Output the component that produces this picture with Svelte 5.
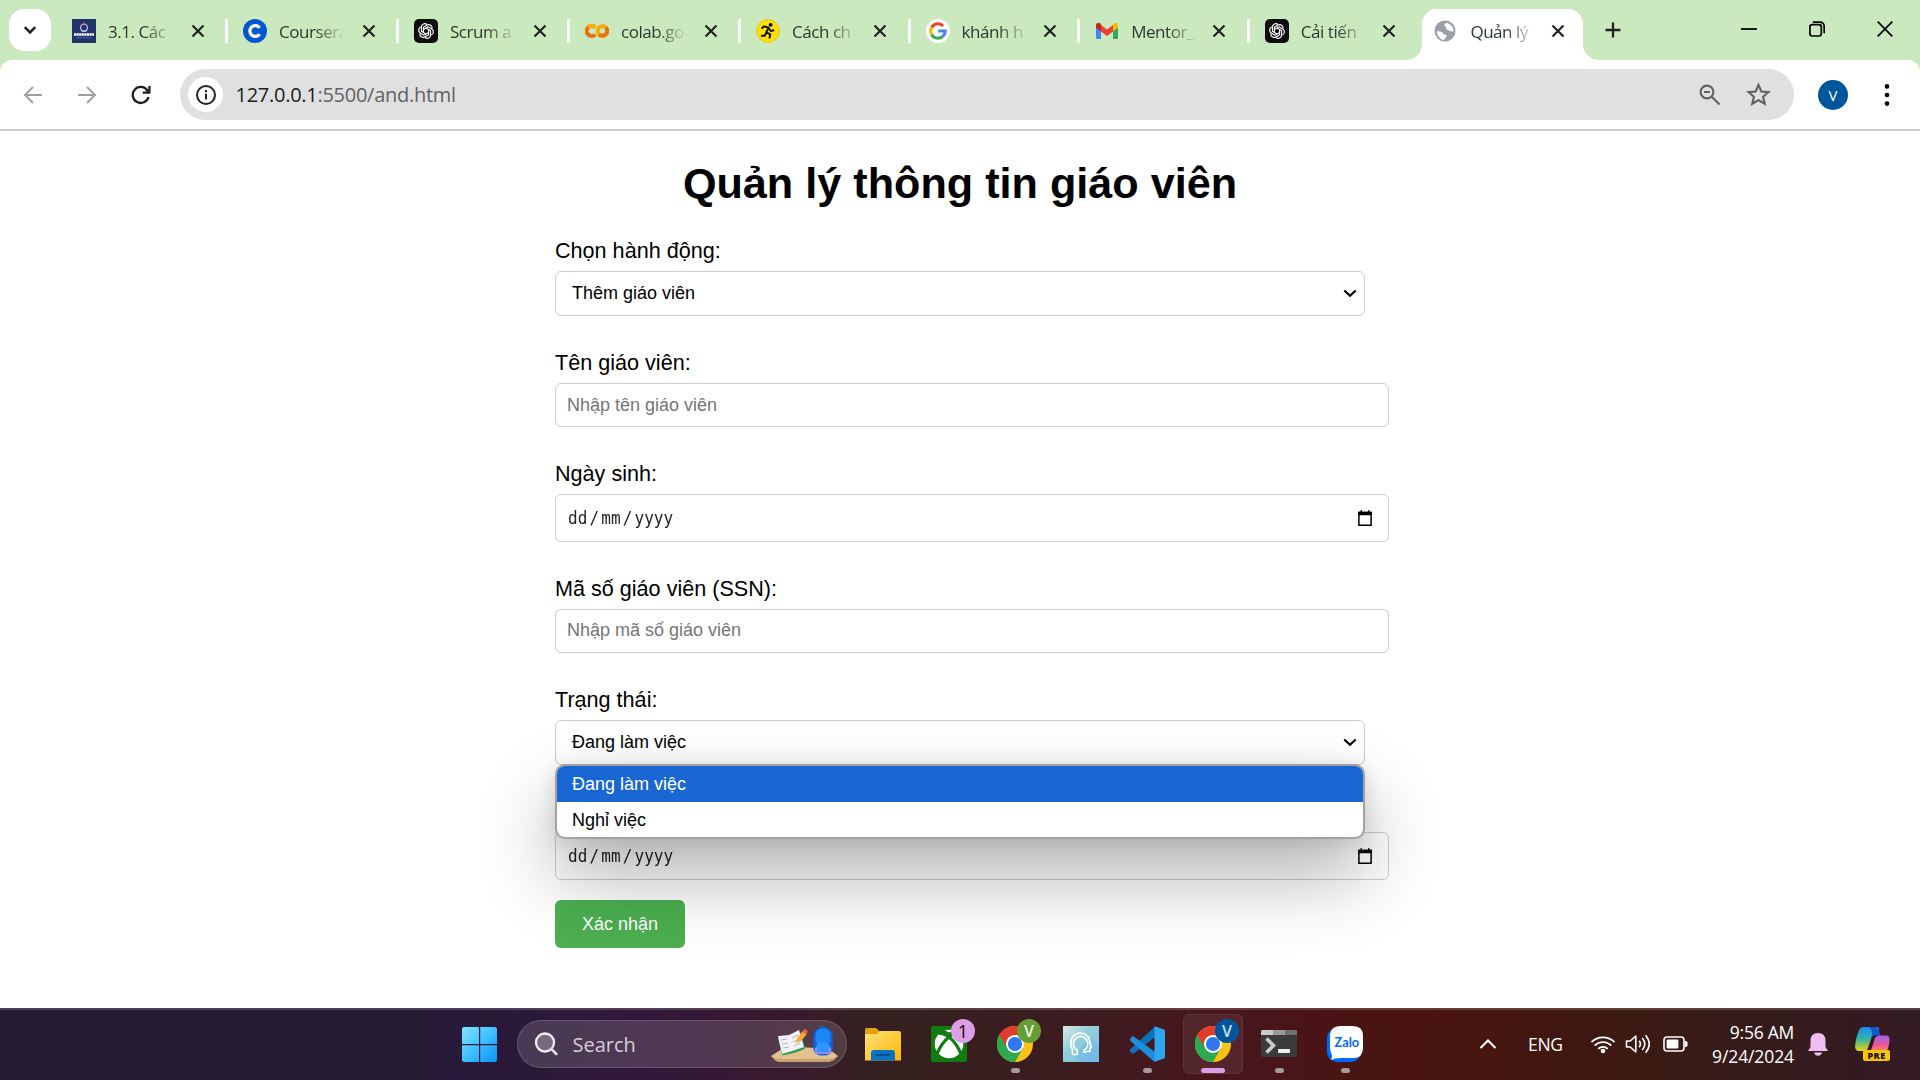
<script>
  const tabs = [
    { icon: 'phenikaa', title: '3.1. Các' },
    { icon: 'coursera', title: 'Coursera' },
    { icon: 'gpt', title: 'Scrum a' },
    { icon: 'colab', title: 'colab.go' },
    { icon: 'runner', title: 'Cách ch' },
    { icon: 'google', title: 'khánh h' },
    { icon: 'gmail', title: 'Mentor_' },
    { icon: 'gpt', title: 'Cải tiến' },
    { icon: 'globe', title: 'Quản lý', active: true }
  ];
  const fields = [
    { label: 'Chọn hành động:', kind: 'select', text: 'Thêm giáo viên' },
    { label: 'Tên giáo viên:', kind: 'text', text: 'Nhập tên giáo viên' },
    { label: 'Ngày sinh:', kind: 'date' },
    { label: 'Mã số giáo viên (SSN):', kind: 'text', text: 'Nhập mã số giáo viên' },
    { label: 'Trạng thái:', kind: 'select', text: 'Đang làm việc', options: ['Đang làm việc', 'Nghỉ việc'] },
    { label: '', kind: 'date' }
  ];
  const apps = [
    { icon: 'folder' },
    { icon: 'xbox', badge: '1', tone: 'pink' },
    { icon: 'chrome', badge: 'V', tone: 'green', run: true },
    { icon: 'head' },
    { icon: 'vscode', run: true },
    { icon: 'chrome', badge: 'V', tone: 'blue', run: true, active: true },
    { icon: 'terminal', run: true },
    { icon: 'zalo', run: true }
  ];
  const petals = [0, 60, 120, 180, 240, 300];
</script>

{#snippet favicon(name)}
  <svg class="fav" viewBox="0 0 24 24">
    {#if name === 'phenikaa'}
      <rect width="24" height="24" fill="#21356d" />
      <circle cx="12" cy="8.6" r="3.4" fill="none" stroke="#c9d0e4" stroke-width="1.1" />
      <path d="M10.4 5.4 12 4l1.6 1.4" fill="none" stroke="#e0603a" stroke-width="1.3" />
      <path d="M9.5 12.3h5" stroke="#c9d0e4" stroke-width="1" />
      <path d="M2 15.5h20" stroke="#fff" stroke-width="2.4" stroke-dasharray="2.2 .4" />
      <path d="M4.5 18.7h15" stroke="#7886ae" stroke-width=".8" stroke-dasharray="1 .5" />
    {:else if name === 'coursera'}
      <circle cx="12" cy="12" r="12" fill="#0056d2" />
      <path d="M16.6 15.2a5.4 5.4 0 1 1 0-6.4" fill="none" stroke="#fff" stroke-width="3.2" />
    {:else if name === 'gpt'}
      <rect width="24" height="24" rx="5" fill="#0d0d0d" />
      <g fill="none" stroke="#fff" stroke-width="1.15" stroke-linejoin="round">
        {#each petals as a}
          <path d="M9.4 13.5V8.2l3.7-2.1c2.6-1.5 5.4.7 5 3.4" transform="rotate({a} 12 12)" />
        {/each}
      </g>
    {:else if name === 'colab'}
      <g fill="none" stroke-width="4">
        <path d="M10.2 8.4A5 5 0 1 0 10.2 15.6" stroke="#e8710a" />
        <path d="M3.2 8.2A5 5 0 0 1 10.2 8.4" stroke="#f9ab00" />
        <circle cx="17.4" cy="12" r="4.8" stroke="#f9ab00" />
        <path d="M14 15.4A4.8 4.8 0 0 0 20.8 8.6" stroke="#e8710a" />
      </g>
    {:else if name === 'runner'}
      <circle cx="12" cy="12" r="11.4" fill="#ffe000" stroke="#e8c11c" />
      <circle cx="14.6" cy="5.8" r="1.9" />
      <path d="M5.5 9.5 8 7.4l4.4 1.2-2 4.6 3.8 2.3-.8 4M10.6 13.6l-2 3.2H5M12.6 9l2.2 3 3.4-.7" fill="none" stroke="#111" stroke-width="2" />
    {:else if name === 'google'}
      <circle cx="12" cy="12" r="12" fill="#fff" />
      <g fill="none" stroke-width="3">
        <path d="M17.2 7A7.3 7.3 0 0 0 5.6 8.5" stroke="#ea4335" />
        <path d="M5.6 8.5a7.3 7.3 0 0 0 0 7" stroke="#fbbc05" />
        <path d="M5.6 15.5A7.3 7.3 0 0 0 16.8 17.4" stroke="#34a853" />
        <path d="M16.8 17.4A7.3 7.3 0 0 0 19.3 12.1H12.2" stroke="#4285f4" />
      </g>
    {:else if name === 'gmail'}
      <path d="M1 6.5v12A1.5 1.5 0 0 0 2.5 20H6V9z" fill="#4285f4" />
      <path d="M23 6.5v12a1.5 1.5 0 0 1-1.5 1.5H18V9z" fill="#34a853" />
      <path d="M6 6v6.4l6 4.6 6-4.6V6l-6 4.6z" fill="#ea4335" />
      <path d="M1 6.4C1 3.8 3.8 3 5.3 4.4L6 5v7.4L1 8.8z" fill="#c5221f" />
      <path d="M23 6.4c0-2.6-2.8-3.4-4.3-2L18 5v7.4l5-3.6z" fill="#fbbc04" />
    {:else}
      <circle cx="11" cy="12" r="10.5" fill="#9aa0a6" />
      <path d="M3 12.500c2.400-.5 5 .3 6.400 2.200 1 1.300 3.600.5 3.400 2.500-.1 1.300-2 1-2.600 3.800-4-.3-7-4-7.200-8.500zM12.500 4c-2.500.5-2.800 2.500-1.200 3.600 1.500 1 .5 3 2.500 3.500 2.200.5 3 2 5.700 1.300.3-3.600-2-7.400-7-8.400z" fill="#fff" />
    {/if}
  </svg>
{/snippet}

{#snippet appIcon(name)}
  <svg class="app-icon" viewBox="0 0 36 36">
    {#if name === 'folder'}
      <path d="M0 4a2 2 0 0 1 2-2h9l4 3.500V10H0z" fill="#e3a008" />
      <path d="M0 8h12l3-3h19a2 2 0 0 1 2 2v27.500H0z" fill="url(#fold)" />
      <path d="M6 34.500V27a3 3 0 0 1 3-3h18a3 3 0 0 1 3 3v7.500z" fill="#0a72c4" />
      <path d="M11 29h14" stroke="#07457e" stroke-width="1.500" />
    {:else if name === 'xbox'}
      <rect width="36" height="36" rx="2" fill="#107c10" />
      <circle cx="18" cy="18" r="14.300" fill="#fff" />
      <path d="M8.500 5.500c3.500-1 7 1 9.500 2.800 2.500-1.800 6-3.800 9.500-2.800M5.500 29.500C8.500 21 13.500 14.500 18 11c4.500 3.500 9.500 10 12.500 18.500M18 11C14.800 8.700 11.500 6.800 8 7.500M18 11c3.200-2.300 6.500-4.200 10-3.500" fill="none" stroke="#107c10" stroke-width="3.200" />
    {:else if name === 'chrome'}
      <circle cx="18" cy="18" r="18" fill="#fbc116" />
      <path d="M18 18 2.400 9A18 18 0 0 0 18 36l7.800-13.500z" fill="#2da94f" />
      <path d="M2.400 9A18 18 0 0 1 33.600 9H18a9 9 0 0 0-7.800 13.500z" fill="#e33b2e" />
      <circle cx="18" cy="18" r="9" fill="#fff" />
      <circle cx="18" cy="18" r="7.100" fill="#2f78ee" />
    {:else if name === 'head'}
      <rect width="36" height="36" fill="url(#teal)" />
      <path d="m11 29 7 7h18V19l-9-7z" fill="#69b3e8" opacity=".5" />
      <g fill="none" stroke="#fff" stroke-width="1.700" stroke-linejoin="round">
        <path d="M9.500 28.500v-5C8.300 21.500 7.800 19.500 7.800 17c0-6 4-9.800 9.700-9.800S27 11 27 16.500l1.300 5H27v4h-4.500" />
        <path d="M9.500 28.500h4.800V24a7.200 7.200 0 1 1 6.700 0v2h2" />
      </g>
    {:else if name === 'vscode'}
      <path d="M1 23.500 25.500 1l2 9L4 28l-3-2.500z" fill="#0b72bd" />
      <path d="M1 12.500 4 10l23.500 17-2 9L1 14.500z" fill="#1a8fdb" />
      <path d="M25.500 0 36 4v28l-10.500 4z" fill="#2fa5ee" />
    {:else if name === 'terminal'}
      <path d="M0 6a2 2 0 0 1 2-2h32a2 2 0 0 1 2 2v4H0z" fill="#9b9b9b" />
      <path d="M0 6a2 2 0 0 1 2-2h10v5H0z" fill="#ccc" />
      <path d="M24 4h10a2 2 0 0 1 2 2v3H24z" fill="#707070" />
      <path d="M0 9h36v20a2 2 0 0 1-2 2H2a2 2 0 0 1-2-2z" fill="#3b3b3b" />
      <path d="m5.500 12.500 7 7-7 7" fill="none" stroke="#ccc" stroke-width="3.600" />
      <rect x="17" y="23" width="12" height="4" rx=".7" fill="#eee" />
    {:else}
      <rect x="0" y="2" width="34" height="34" rx="10" fill="#0068ff" />
      <path d="M14 0h12q10 0 10 10v12q0 10-10 10H14q-4 0-6 .6-2 1.200-4.500.8 2-1.700 1.500-4Q3 26 3 20V10Q3 0 14 0z" fill="#fff" />
      <text x="19.800" y="21" text-anchor="middle" class="zalo">Zalo</text>
    {/if}
  </svg>
{/snippet}

{#snippet cross()}
  <svg class="cross" viewBox="0 0 16 16"><path d="m2.500 2.500 11 11m0-11-11 11" fill="none" stroke="#1f2420" stroke-width="2.200" /></svg>
{/snippet}

<svg class="defs" aria-hidden="true">
  <defs>
    <linearGradient id="fold" x2="1" y2="1"><stop stop-color="#ffe07a" /><stop offset="1" stop-color="#fdb900" /></linearGradient>
    <linearGradient id="teal" x2="1" y2="1"><stop stop-color="#d9e9e4" /><stop offset=".4" stop-color="#93cfd9" /><stop offset="1" stop-color="#7bbfec" /></linearGradient>
    <linearGradient id="win" x2="1" y2="1"><stop stop-color="#86e4ff" /><stop offset=".5" stop-color="#3fc0ff" /><stop offset="1" stop-color="#0893fa" /></linearGradient>
    <linearGradient id="cpA" x2="0" y2="1"><stop stop-color="#1b8df0" /><stop offset=".5" stop-color="#35b4a0" /><stop offset="1" stop-color="#e9d312" /></linearGradient>
    <linearGradient id="cpB" x2="0" y2="1"><stop stop-color="#a45cf0" /><stop offset=".6" stop-color="#f0569a" /><stop offset="1" stop-color="#fc8a4e" /></linearGradient>
  </defs>
</svg>

<div class="screen">
  <header class="strip">
    <button class="tab-search" aria-label="Search tabs">
      <svg width="16" height="16" viewBox="0 0 16 16"><path d="m2.800 5.200 5.200 5.200 5.200-5.200" fill="none" stroke="#1f2420" stroke-width="2.500" /></svg>
    </button>
    <div class="tabs">
      {#each tabs as tab}
        <div class="tab" class:active={tab.active}>
          {@render favicon(tab.icon)}
          <span class="title">{tab.title}</span>
          {@render cross()}
        </div>
      {/each}
    </div>
    <svg class="plus" width="18" height="18" viewBox="0 0 18 18"><path d="M9 1.500v15M1.500 9h15" stroke="#1f2420" stroke-width="2.300" /></svg>
    <div class="window">
      <svg viewBox="0 0 16 16"><path d="M0 8h16" stroke="#000" stroke-width="1.800" /></svg>
      <svg viewBox="0 0 16 16"><rect x=".9" y="3.600" width="11.400" height="11.400" rx="2.400" /><path d="M3.800 1.200h7.200a4.200 4.200 0 0 1 4.200 4.200v6.800" /></svg>
      <svg viewBox="0 0 16 16"><path d="m.7.700 14.600 14.600m0-14.600L.7 15.300" /></svg>
    </div>
  </header>

  <div class="toolbar">
    <svg class="nav" viewBox="0 0 20 20"><path d="M19 10H2.500M10 2l-8 8 8 8" stroke="#a0a0a0" /></svg>
    <svg class="nav" viewBox="0 0 20 20"><path d="M1 10h16.500M10 2l8 8-8 8" stroke="#a0a0a0" /></svg>
    <svg class="nav" viewBox="0 0 20 20"><path d="M17.500 12A8 8 0 1 1 16.200 5.200L18 7.300M18.400 1v6.600h-6.600" stroke="#1f1f1f" stroke-width="2.300" /></svg>
    <div class="omnibox">
      <span class="info">
        <svg width="22" height="22" viewBox="0 0 22 22"><circle cx="11" cy="11" r="9" fill="none" stroke="#222" stroke-width="2" /><path d="M11 9.800v5.700M11 6v2.200" stroke="#222" stroke-width="2" /></svg>
      </span>
      <span class="url">127.0.0.1<span>:5500/and.html</span></span>
      <svg class="zoomed" viewBox="0 0 22 22"><circle cx="8" cy="8" r="6.400" /><path d="m12.700 12.700 7.800 7.800M5 8h6" /></svg>
      <svg class="star" viewBox="0 0 24 24"><path d="m12 2.800 2.700 6.300 6.900.6-5.200 4.500 1.600 6.700-6-3.500-6 3.500 1.600-6.700-5.200-4.500 6.900-.6z" /></svg>
    </div>
    <span class="avatar">V</span>
    <svg class="dots" width="6" height="24" viewBox="0 0 6 24"><circle cx="3" cy="3.400" r="2.300" /><circle cx="3" cy="12" r="2.300" /><circle cx="3" cy="20.600" r="2.300" /></svg>
  </div>

  <main>
    <h1>Quản lý thông tin giáo viên</h1>
    <form>
      {#each fields as f}
        <div class="field">
          <span class="label">{f.label}</span>
          <div class="control {f.kind}">
            {#if f.kind === 'date'}
              <span class="mask"><span>dd</span><span>/</span><span>mm</span><span>/</span><span>yyyy</span></span>
              <svg width="16" height="17" viewBox="0 0 16 17"><path d="M1.900 2.500h12.200v12.800H1.900z" fill="none" stroke="#000" stroke-width="1.500" /><path d="M1.200 1.800h13.600v3.400H1.200zM3.500.3H5V3H3.500zM11 .3h1.500V3H11z" /></svg>
            {:else}
              <span>{f.text}</span>
              {#if f.kind === 'select'}
                <svg width="14" height="9" viewBox="0 0 14 9"><path d="m1.300 1.500 5.700 5.300 5.700-5.300" fill="none" stroke="#000" stroke-width="2.100" /></svg>
              {/if}
            {/if}
            {#if f.options}
              <div class="popup">
                {#each f.options as option, i}
                  <div class="option" class:chosen={i === 0}>{option}</div>
                {/each}
              </div>
            {/if}
          </div>
        </div>
      {/each}
      <button class="submit" type="button">Xác nhận</button>
    </form>
  </main>

  <footer class="taskbar">
    <div class="launch">
      <svg class="start" viewBox="0 0 35 35"><path d="M1.500 0H17v17H0V1.500zM18.200 0h15.300L35 1.500V17H18.200zM0 18.200h17V35H1.500L0 33.500zM18.200 18.200H35v15.300L33.500 35H18.200z" fill="url(#win)" /></svg>
      <div class="search">
        <svg width="24" height="24" viewBox="0 0 24 24"><circle cx="11" cy="10.500" r="9" fill="#77697f" stroke="#eee" stroke-width="2.300" /><path d="m17.300 17 5 5" stroke="#ddd" stroke-width="2.600" stroke-linecap="round" /></svg>
        <span>Search</span>
        <svg class="study" width="67" height="38" viewBox="0 0 67 38">
          <path d="M0 30 11 23q22-4 48 1l8 6-5 4.500Q58 36 54 36H11q-5 0-7-2z" fill="#e3c193" />
          <path d="M0 30q4 3 10 3h47q6 0 10-3l-5 4.500Q58 36 54 36H11q-5 0-7-2z" fill="#c9a26e" />
          <path d="m7 12 13-1 10-5 4 17-11 4-12 2.500z" fill="#2f9e4f" />
          <path d="m7 10 11-1 3 16-10 3zM18 9l10-5 5 17-12 4z" fill="#f4f2f7" />
          <path d="m10 14 6-1m-5 5 6-1m-5 5 6-1m3-9 6-3m-5 7 6-3m-5 7 6-3" stroke="#b3afbd" />
          <path d="m25 17 1-5 6-7 4 3-6 7z" fill="#f6a93b" />
          <path d="m31.500 5.500 2-3 3.500 3-2 3z" fill="#ef5b45" />
          <path d="M48 3q4-5 8 0" fill="none" stroke="#1465cf" stroke-width="1.500" />
          <rect x="42.300" y="2" width="19.500" height="27.500" rx="8" fill="#0f62d8" />
          <rect x="44.500" y="2.500" width="15" height="18" rx="7" fill="#1b86f5" />
          <path d="M44 24q1-8 8-8t8 8v2q0 2-2 2H46q-2 0-2-2z" fill="#2f96ff" />
          <path d="M45 22v3q0 2 2 2h10q2 0 2-2v-3" fill="none" stroke="#b487f6" stroke-width="1.600" />
        </svg>
      </div>
      {#each apps as app}
        <div class="slot" class:current={app.active}>
          {@render appIcon(app.icon)}
          {#if app.badge}<span class="badge {app.tone}">{app.badge}</span>{/if}
          {#if app.run}<i class="run"></i>{/if}
        </div>
      {/each}
    </div>
    <div class="tray">
      <svg class="up" width="18" height="12" viewBox="0 0 18 12"><path d="m1.500 10 7.500-7.500 7.500 7.500" fill="none" stroke="#fff" stroke-width="2" /></svg>
      <span class="lang">ENG</span>
      <svg class="wifi" width="26" height="20" viewBox="0 0 26 20"><g fill="none" stroke="#fff" stroke-width="1.800"><path d="M1.500 8.200a16.200 16.200 0 0 1 23 0M4.800 11.600a11.600 11.600 0 0 1 16.400 0M8.200 14.800a6.800 6.800 0 0 1 9.600 0" /></g><circle cx="13" cy="17" r="2.300" fill="#fff" /></svg>
      <svg class="sound" width="26" height="20" viewBox="0 0 26 20"><g fill="none" stroke="#fff" stroke-width="1.600" stroke-linejoin="round"><path d="M1.500 7h3.700l5.600-5v16l-5.600-5H1.500zM14.200 6.800q2.400 3.200 0 6.400M17.300 4q5 6 0 12M20.500 1.200q7.500 8.800 0 17.600" /></g></svg>
      <svg class="battery" width="25" height="16" viewBox="0 0 25 16"><rect x="1" y="1" width="20" height="14" rx="3" fill="none" stroke="#fff" stroke-width="1.600" /><rect x="3.600" y="3.600" width="11.800" height="8.800" rx="1" fill="#fff" /><path d="M22 5h1.200L24.500 6.300v3.400L23.200 11H22z" fill="#fff" /></svg>
      <div class="clock"><span>9:56 AM</span><span>9/24/2024</span></div>
      <svg class="bell" width="20" height="23" viewBox="0 0 20 23"><path d="M10 0q7.500 0 7.500 8v6l2.500 4H0l2.500-4V8Q2.500 0 10 0zM6 19.500h8q-1 3.200-4 3.200t-4-3.200z" fill="#f0bdf2" /></svg>
      <div class="copilot">
        <svg width="35" height="27" viewBox="0 0 35 27"><path d="M9 0h12q4 0 3 4l-4 4q-3 0-4 4l-3 9q-1 3-4 3H4q-4 0-4-5Q1 10 4 3q1.500-3 5-3z" fill="url(#cpA)" /><path d="M19 0q4 0 5 4l1.500 4.500H20q-3 0-4 4L17 6q0-5-4-6z" fill="#1758cf" /><path d="M25 8.500h6q4 0 3.500 5-.5 6-2.500 11H12q4 0 5-4l2.500-8q1-4 5.500-4z" fill="url(#cpB)" /></svg>
        <b>PRE</b>
      </div>
    </div>
  </footer>
</div>

<style>
  :global(body) { background: #fff; overflow: hidden; }
  .defs { position: absolute; width: 0; height: 0; }
  svg { display: block; flex: none; }
  .screen { width: 1920px; height: 1080px; display: flex; flex-direction: column; overflow: hidden; background: #cae9be; font-family: "Open Sans", "Noto Sans", sans-serif; }

  .strip { height: 60px; flex: none; display: flex; box-sizing: border-box; padding-left: 9px; }
  .tab-search { width: 42px; height: 42px; margin: 9px 9px 0 0; padding: 0; border: 0; border-radius: 15px; background: #fff; display: grid; place-items: center; }
  .tabs { display: flex; padding-top: 9px; }
  .tab { width: 171px; height: 51px; box-sizing: border-box; padding: 0 3px 7px 12px; display: flex; align-items: center; position: relative; }
  .tab:nth-child(n + 5) { width: 169.600px; }
  .fav { width: 24px; height: 24px; margin-top: -1px; }
  .title { width: 72px; height: 26px; line-height: 26px; margin: 1px 0 0 12px; overflow: hidden; white-space: nowrap; font-size: 17px; letter-spacing: -.45px; color: #2f3830; -webkit-mask-image: linear-gradient(90deg, #000 36px, transparent 66px); mask-image: linear-gradient(90deg, #000 36px, transparent 66px); }
  .cross { width: 16px; height: 16px; margin-left: 10px; }
  .tab:nth-child(n + 5) .cross { margin-left: 8px; }
  .tab::after { content: ''; width: 3px; height: 24px; background: #fff; margin-left: auto; border-radius: 1px; }
  .tab:nth-child(8)::after { background: transparent; }
  .tab:nth-child(9) { width: 160.500px; background: #fff; border-radius: 15px 15px 0 0; }
  .tab.active::before, .tab.active::after { content: ''; position: absolute; bottom: 0; margin: 0; width: 15px; height: 15px; border-radius: 0; }
  .tab.active::before { left: -15px; background: radial-gradient(circle at 0 0, transparent 14.500px, #fff 15px); }
  .tab.active::after { right: -15px; background: radial-gradient(circle at 100% 0, transparent 14.500px, #fff 15px); }
  .plus { margin: 21px 0 0 21px; }
  .window { display: flex; gap: 52px; margin: 21px 27px 0 auto; }
  .window svg { width: 16px; height: 16px; fill: none; stroke: #000; stroke-width: 1.700; }

  .toolbar { height: 71px; flex: none; box-sizing: border-box; background: #fff; border-radius: 12px 12px 0 0; border-bottom: 2px solid #cbcbcb; display: flex; align-items: center; padding-left: 23px; }
  .nav { width: 20px; height: 20px; margin-right: 34px; fill: none; stroke-width: 2; }
  .nav:nth-child(3) { margin-right: 29px; }
  .omnibox { width: 1614px; height: 51px; box-sizing: border-box; border-radius: 26px; background: #e0e0e0; display: flex; align-items: center; padding: 0 23px 0 8px; }
  .info { width: 35px; height: 35px; border-radius: 50%; background: #fff; display: grid; place-items: center; }
  .url { margin-left: 12.500px; font-size: 20px; line-height: 28px; letter-spacing: -.270px; color: #1c1c1c; flex: 1; }
  .url span { color: #626262; }
  .zoomed { width: 22px; height: 22px; fill: none; stroke: #5f6060; stroke-width: 2.100; margin-right: 25px; }
  .star { width: 25px; height: 25px; fill: none; stroke: #5f6060; stroke-width: 2; }
  .avatar { width: 30px; height: 30px; border-radius: 50%; background: #00569c; color: #fff; font-size: 15px; line-height: 30px; text-align: center; margin-left: 24px; }
  .dots { margin-left: 36px; }

  main { height: 877px; flex: none; background: #fff; font-family: "Liberation Sans", Arial, sans-serif; color: #000; box-sizing: border-box; padding-top: 28px; }
  h1 { margin: 0 0 30px; font-size: 43.200px; line-height: 49px; text-align: center; }
  form { width: 834px; margin-left: 555px; display: flex; flex-direction: column; align-items: flex-start; }
  .field { width: 834px; margin-bottom: 34px; }
  .field:nth-of-type(6) { margin-bottom: 20px; }
  .label { display: block; height: 25px; line-height: 25px; font-size: 21.600px; margin-bottom: 8px; }
  .control { box-sizing: border-box; border: 1px solid #ccc; border-radius: 6px; font-size: 18px; display: flex; align-items: center; justify-content: space-between; position: relative; }
  .select { width: 810px; height: 45px; padding: 0 7px 0 16px; }
  .text { height: 44px; padding: 0 11px; color: #757575; }
  .field:nth-of-type(4) .text { padding-bottom: 2px; }
  .date { height: 48px; padding: 0 15px 0 12px; }
  .mask { display: flex; gap: 2.400px; font-family: "DejaVu Sans Mono", monospace; font-size: 17.600px; color: #222; transform: scaleX(.910); transform-origin: left; }
  .popup { position: absolute; z-index: 2; left: -1px; top: 43px; width: 810px; box-sizing: border-box; border: 2px solid #a2a2a2; border-radius: 10px; overflow: hidden; background: #fff; box-shadow: 0 36px 76px rgba(0, 0, 0, .32), 0 4px 20px rgba(0, 0, 0, .13); }
  .option { height: 35px; line-height: 36px; padding-left: 15px; }
  .chosen { height: 36px; background: #1967d2; color: #fff; }
  .submit { width: 130px; height: 48px; border: 0; border-radius: 6px; padding: 0; background: #4caf50; color: #fff; font: 18px "Liberation Sans", Arial, sans-serif; }

  .taskbar { height: 72px; position: relative; z-index: 3; flex: none; box-sizing: border-box; padding-bottom: 2px; border-top: 2px solid rgba(255, 255, 255, .17); display: flex; justify-content: space-between; color: #fff; background: linear-gradient(90deg, #241c30 0, #251d32 400px, #271a3a 450px, #291a38 480px, #33183a 670px, #38192f 770px, #35201f 880px, #3b1d20 1050px, #48151c 1240px, #49140f 1420px, #3e1911 1600px, #351c1a 1750px, #341a24 1920px); background-origin: border-box; }
  .launch { display: flex; align-items: center; padding-left: 462px; }
  .start { width: 35px; height: 35px; }
  .search { width: 330px; height: 48px; box-sizing: border-box; margin: 0 6px 0 20px; border: 1.500px solid rgba(255, 255, 255, .15); border-radius: 24px; background: rgba(255, 255, 255, .14); display: flex; align-items: center; padding: 0 8px 0 16px; }
  .search > span { margin-left: 14.500px; font-size: 20px; color: #d7ced9; flex: 1; }
  .study { margin-top: 2px; }
  .slot { width: 60px; height: 60px; box-sizing: border-box; margin-right: 6px; display: grid; place-items: center; position: relative; border-radius: 6px; }
  .slot.current { background: rgba(255, 255, 255, .07); border: 1px solid rgba(255, 255, 255, .07); }
  .app-icon { width: 36px; height: 36px; }
  .zalo { font: 700 12.800px Lato, sans-serif; fill: #0068ff; }
  .badge { position: absolute; width: 24px; height: 24px; border-radius: 50%; left: 32px; top: 5px; font-size: 16px; line-height: 24px; text-align: center; }
  .current .badge { left: 31px; top: 4px; }
  .pink { background: #dc9ee6; color: #111; font-size: 18px; }
  .green { background: #669d34; color: #e8f1df; font-weight: 600; }
  .blue { background: #00569c; color: #c9dff2; font-weight: 600; }
  .run { position: absolute; left: 25.500px; bottom: 1px; width: 9px; height: 5px; border-radius: 3px; background: #a6999b; }
  .current .run { left: 17px; bottom: 0; width: 24px; background: #dc9ee6; }
  .tray { display: flex; align-items: center; padding-right: 30px; }
  .lang { margin: 0 27px 0 31px; width: 35px; font-size: 17.500px; letter-spacing: -.3px; }
  .wifi { margin-right: 9px; }
  .sound { margin-right: 12px; }
  .clock { width: 106px; display: flex; flex-direction: column; align-items: flex-end; font-size: 17.500px; line-height: 24px; letter-spacing: -.1px; white-space: nowrap; }
  .clock span:first-child { letter-spacing: -.250px; }
  .bell { margin: 0 27px 0 14px; }
  .copilot { width: 35px; height: 34px; position: relative; }
  .copilot b { position: absolute; left: 8px; bottom: 0; width: 27px; height: 11px; border-radius: 2px; background: #fcc30d; color: #1a1200; font: 800 9px/11px "Open Sans", sans-serif; letter-spacing: .5px; text-align: center; }
</style>
